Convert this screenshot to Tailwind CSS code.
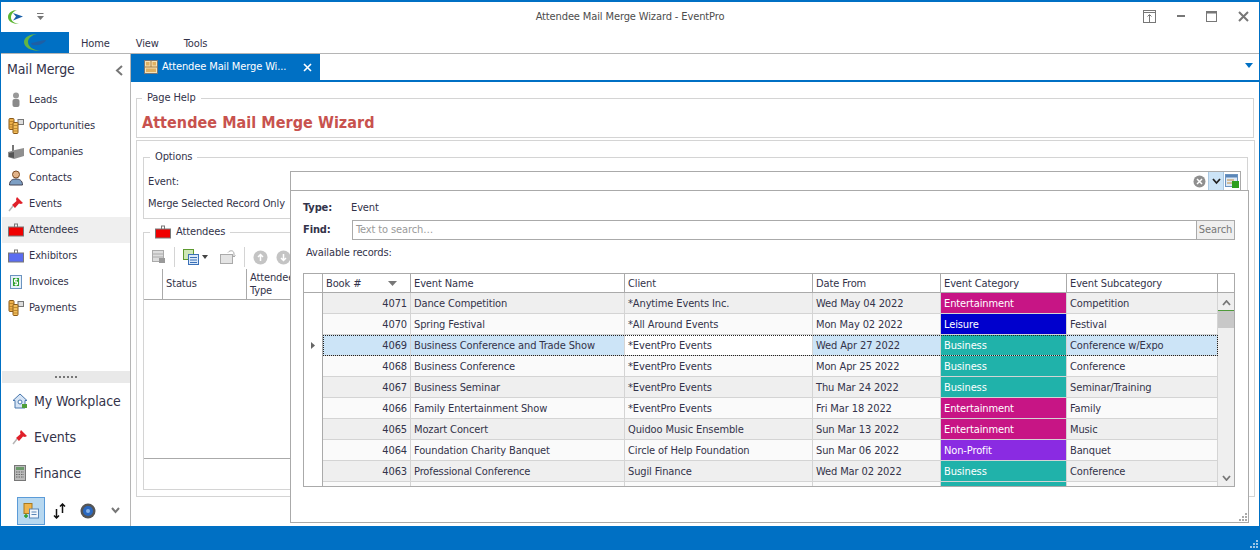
<!DOCTYPE html>
<html lang="en">
<head>
<meta charset="UTF-8">
<title>Attendee Mail Merge Wizard - EventPro</title>
<script src="https://cdn.jsdelivr.net/npm/@tailwindcss/browser@4"></script>
</head>
<body class="bg-white">
<div class="relative w-[1260px] h-[550px] overflow-hidden flex flex-col bg-white font-['DejaVu_Sans',sans-serif] [font-stretch:condensed] text-[11px] tracking-[-0.12px] text-[#33334a] border-t-2 border-x border-[#0070c4]">

  <!-- title bar -->
  <div class="relative h-[30px] shrink-0 flex items-center">
    <svg class="ml-[6px] mt-[-1px] shrink-0" width="18" height="16" viewBox="0 0 18 16"><path d="M10 1C5 1 1 4 1 8 1 12 5 15 12 15 7 14 4 12 4 8.500 4 5 6.500 2.500 10 1Z" fill="#5cb531"/><path d="M6 4L16 7.500 6 11.500 9 7.500Z" fill="#1a5fa8"/></svg>
    <svg class="ml-[11px] shrink-0" width="9" height="8" viewBox="0 0 9 8"><path d="M1 0.500H7.500" stroke="#777" stroke-width="1"/><path d="M1 3H8L4.500 7Z" fill="#777"/></svg>
    <div class="absolute left-0 right-0 top-[7px] text-center text-[#4d4d4d]">Attendee Mail Merge Wizard - EventPro</div>
    <div class="absolute right-[10px] top-[8px] flex gap-[20px] items-center">
      <svg width="13" height="13" viewBox="0 0 13 13" fill="none" stroke="#777"><rect x="0.500" y="0.500" width="12" height="12"/><path d="M0.500 2.500H12.500" /><path d="M6.500 12V5M4.500 6.500L6.500 4.500 8.500 6.500"/></svg>
      <svg width="10" height="13" viewBox="0 0 10 13"><rect x="1" y="5" width="8" height="2" fill="#777"/></svg>
      <svg width="11" height="11" viewBox="0 0 11 11" fill="none" stroke="#777"><rect x="0.500" y="0.500" width="10" height="10"/><rect x="0" y="0" width="11" height="2.500" fill="#777" stroke="none"/></svg>
      <svg class="ml-[1px]" width="11" height="11" viewBox="0 0 11 11" fill="none" stroke="#777" stroke-width="2"><path d="M1 1L10 10M10 1L1 10"/></svg>
    </div>
  </div>

  <!-- ribbon tabs -->
  <div class="h-[22px] shrink-0 flex items-center border-b border-[#b5b5b5]">
    <div class="w-[68px] h-full bg-[#0070c4] flex items-center justify-center">
      <svg width="24" height="20" viewBox="0 0 24 20"><path d="M14 1C7 1 1 4 1 9 1 14 7 18 18 18 9 17 5 13 5 9 5 5 9 2 14 1Z" fill="#62b544"/><path d="M8 10C12 10 18 7 23 7 21 11 15 13 9 12Z" fill="#1e5fa5"/></svg>
    </div>
    <span class="ml-[12px] mt-[4px]">Home</span>
    <span class="ml-[26px] mt-[4px]">View</span>
    <span class="ml-[25px] mt-[4px]">Tools</span>
  </div>

  <div class="flex flex-1 min-h-0">
    <!-- sidebar -->
    <div class="w-[130px] shrink-0 border-r border-[#b5b5b5] flex flex-col">
      <div class="h-[32px] mb-px shrink-0 flex items-center justify-between pl-[6px] pr-[7px]">
        <span class="text-[14px] -mt-[1px]">Mail Merge</span>
        <svg width="8" height="11" viewBox="0 0 8 11" fill="none" stroke="#777" stroke-width="2"><path d="M7 1L2 5.500 7 10"/></svg>
      </div>
      <div class="flex flex-col">
        <div class="h-[26px] flex items-center gap-[5px] pl-[7px]">
          <svg class="shrink-0" width="16" height="16" viewBox="0 0 16 16"><circle cx="8" cy="3.500" r="3" fill="#999"/><rect x="4.500" y="7" width="7" height="8" rx="2" fill="#8a8a8a"/></svg><span>Leads</span>
        </div>
        <div class="h-[26px] flex items-center gap-[5px] pl-[7px]">
          <svg class="shrink-0" width="16" height="16" viewBox="0 0 16 16"><rect x="10" y="1.500" width="5.500" height="5" fill="#ddd" stroke="#777"/><rect x="1" y="0.500" width="5" height="11" rx="1" fill="#eeb04a" stroke="#8a5a1a"/><rect x="5" y="4.500" width="5" height="11" rx="1" fill="#f4bf5c" stroke="#8a5a1a"/><path d="M1.500 3.500H5.500M1.500 6.500H5M1.500 9H5M5.500 7.500H9.500M5.500 10.500H9.500M5.500 13H9.500" stroke="#a8741e" stroke-width="0.700"/></svg><span>Opportunities</span>
        </div>
        <div class="h-[26px] flex items-center gap-[5px] pl-[7px]">
          <svg class="shrink-0" width="16" height="16" viewBox="0 0 16 16"><rect x="4" y="1" width="2" height="8" fill="#777"/><path d="M0 8L7 6 16 4V12L6 15 0 13Z" fill="#8f8f8f"/><path d="M1 9L6 8V14L1 13Z" fill="#555"/></svg><span>Companies</span>
        </div>
        <div class="h-[26px] flex items-center gap-[5px] pl-[7px]">
          <svg class="shrink-0" width="16" height="16" viewBox="0 0 16 16"><circle cx="8" cy="4.500" r="3.500" fill="#e2b48a" stroke="#7a4a22"/><path d="M1.500 15C1.500 10 5 9 8 9 11 9 14.500 10 14.500 15Z" fill="#7d9fc4" stroke="#445"/></svg><span>Contacts</span>
        </div>
        <div class="h-[26px] flex items-center gap-[5px] pl-[7px]">
          <svg class="shrink-0" width="16" height="16" viewBox="0 0 16 16"><path d="M9 1L15 7 13 8 11 7.500 7 12 4 9 8.500 5 8 3Z" fill="#e0202a"/><path d="M5 10L1 15" stroke="#b5b5b5" stroke-width="1.500"/></svg><span>Events</span>
        </div>
        <div class="h-[26px] flex items-center gap-[5px] pl-[7px] bg-[#efefef] ml-px">
          <svg class="-ml-px shrink-0" width="16" height="16" viewBox="0 0 16 16"><rect x="6.500" y="2" width="3" height="4" fill="none" stroke="#777"/><rect x="0.500" y="5" width="15" height="9" fill="#f00000" stroke="#777"/></svg><span>Attendees</span>
        </div>
        <div class="h-[26px] flex items-center gap-[5px] pl-[7px]">
          <svg class="shrink-0" width="16" height="16" viewBox="0 0 16 16"><rect x="6.500" y="2" width="3" height="4" fill="none" stroke="#777"/><rect x="0.500" y="5" width="15" height="9" fill="#5a6cf0" stroke="#777"/></svg><span>Exhibitors</span>
        </div>
        <div class="h-[26px] flex items-center gap-[5px] pl-[7px]">
          <svg class="shrink-0" width="16" height="16" viewBox="0 0 16 16"><rect x="2.500" y="1.500" width="11" height="13" fill="#e6f0fa" stroke="#6c94c0"/><rect x="5" y="4" width="6" height="8" fill="#2e9e2e"/><path d="M9.500 5.500H6.500V8H9.500V10.500H6.500M8 4V12" fill="none" stroke="#fff"/></svg><span>Invoices</span>
        </div>
        <div class="h-[26px] flex items-center gap-[5px] pl-[7px]">
          <svg class="shrink-0" width="16" height="16" viewBox="0 0 16 16"><rect x="10" y="1.500" width="5.500" height="5" fill="#ddd" stroke="#777"/><rect x="1" y="0.500" width="5" height="11" rx="1" fill="#eeb04a" stroke="#8a5a1a"/><rect x="5" y="4.500" width="5" height="11" rx="1" fill="#f4bf5c" stroke="#8a5a1a"/><path d="M1.500 3.500H5.500M1.500 6.500H5M1.500 9H5M5.500 7.500H9.500M5.500 10.500H9.500M5.500 13H9.500" stroke="#a8741e" stroke-width="0.700"/></svg><span>Payments</span>
        </div>
      </div>
      <div class="flex-1"></div>
      <div class="h-[12px] bg-[#e9e9e9] flex items-center justify-center gap-[2px] ml-px">
        <i class="w-[2px] h-[2px] bg-[#777]"></i><i class="w-[2px] h-[2px] bg-[#777]"></i><i class="w-[2px] h-[2px] bg-[#777]"></i><i class="w-[2px] h-[2px] bg-[#777]"></i><i class="w-[2px] h-[2px] bg-[#777]"></i><i class="w-[2px] h-[2px] bg-[#777]"></i>
      </div>
      <div class="h-[36px] flex items-center gap-[6px] pl-[11px] text-[14px]">
        <svg class="shrink-0" width="16" height="16" viewBox="0 0 16 16"><path d="M8 1L1 7.500H3V15H13V7.500H15Z" fill="#d6e4f5" stroke="#4a78ad"/><circle cx="8" cy="9" r="2" fill="#fff" stroke="#4a78ad"/><rect x="10" y="11" width="5" height="4" fill="#4f9e38"/></svg><span>My Workplace</span>
      </div>
      <div class="h-[36px] flex items-center gap-[6px] pl-[11px] text-[14px]">
        <svg class="shrink-0" width="16" height="16" viewBox="0 0 16 16"><path d="M9 1L15 7 13 8 11 7.500 7 12 4 9 8.500 5 8 3Z" fill="#e0202a"/><path d="M5 10L1 15" stroke="#b5b5b5" stroke-width="1.500"/></svg><span>Events</span>
      </div>
      <div class="h-[36px] mb-[5px] flex items-center gap-[6px] pl-[11px] text-[14px]">
        <svg class="shrink-0" width="16" height="16" viewBox="0 0 16 16"><rect x="2.500" y="0.500" width="11" height="15" fill="#bbb" stroke="#777"/><rect x="4" y="2" width="8" height="3" fill="#6a9a6a"/><path d="M4 7H12M4 9.500H12M4 12H12" stroke="#666" stroke-dasharray="1.500 1"/></svg><span>Finance</span>
      </div>
      <div class="h-[30px] shrink-0 flex items-center pl-[16px] pb-[1px]">
        <div class="w-[28px] h-[28px] bg-[#b7d8f0] border border-[#5b9bd8] flex items-center justify-center">
          <svg width="16" height="16" viewBox="0 0 16 16"><rect x="1" y="0.500" width="8" height="10" fill="#f0b44c" stroke="#a87a20"/><rect x="6.500" y="6" width="9" height="9" fill="#f2f6fb" stroke="#5a86b8"/><path d="M8.500 9H13.500M8.500 11.500H13.500" stroke="#5a86b8"/><path d="M3 11V15M1 13H5" stroke="#2e9e2e" stroke-width="1.500"/></svg>
        </div>
        <svg class="ml-[7px]" width="16" height="16" viewBox="0 0 16 16" fill="none" stroke="#111" stroke-width="1.500"><path d="M4.500 6V15M2 12.500L4.500 15 7 12.500"/><path d="M10.500 10V1M8 3.500L10.500 1 13 3.500"/></svg>
        <svg class="ml-[12px]" width="16" height="16" viewBox="0 0 16 16"><circle cx="8" cy="8" r="7.500" fill="#555"/><circle cx="8" cy="8" r="5" fill="#2a68c0"/><circle cx="8" cy="8" r="2" fill="#8ab4e8"/></svg>
        <svg class="ml-[15px]" width="9" height="7" viewBox="0 0 9 7" fill="none" stroke="#777" stroke-width="2"><path d="M1 1L4.500 5 8 1"/></svg>
      </div>
    </div>

    <!-- main -->
    <div class="flex-1 min-w-0 flex flex-col">
      <div class="h-[28px] shrink-0 flex border-b-2 border-[#0070c4]">
        <div class="w-[189px] bg-[#0070c4] text-white flex items-center pl-[13px] gap-[4px]">
          <svg class="shrink-0" width="14" height="14" viewBox="0 0 14 14"><rect x="0.500" y="0.500" width="13" height="13" fill="#f4e3b8" stroke="#777"/><path d="M7 1V7M1 7H13" stroke="#a77b3c"/><rect x="2" y="2" width="3.500" height="3.500" fill="#e0b060"/><rect x="8.500" y="2" width="3.500" height="3.500" fill="#e0b060"/><rect x="2" y="8.500" width="10" height="3.500" fill="#e0b060"/></svg>
          <span class="whitespace-nowrap">Attendee Mail Merge Wi...</span>
          <svg class="ml-[13px] shrink-0" width="9" height="9" viewBox="0 0 9 9" fill="none" stroke="#fff" stroke-width="1.600"><path d="M1 1L8 8M8 1L1 8"/></svg>
        </div>
        <div class="flex-1 flex justify-end pr-[6px] pt-[9px]">
          <svg width="8" height="5" viewBox="0 0 8 5"><path d="M0 0H8L4 5Z" fill="#0070c4"/></svg>
        </div>
      </div>

      <div class="flex-1 min-h-0 flex flex-col pl-[5px] pr-[5px] pt-[16px]">
        <!-- page help -->
        <div class="relative h-[40px] shrink-0 border border-[#d4d4d4]">
          <span class="absolute left-[5px] -top-[8px] bg-white px-[5px] leading-[14px]">Page Help</span>
          <div class="pl-[5px] pt-[13px] text-[16px] tracking-[0.05px] font-bold text-[#c8524e] leading-[22px] whitespace-nowrap">Attendee Mail Merge Wizard</div>
        </div>
        <!-- outer group -->
        <div class="relative mt-[2px] h-[357px] border border-[#d4d4d4] px-[6px] pt-[16px] mr-[-1px]">
          <div class="relative h-[62px] border border-[#d4d4d4]">
            <span class="absolute left-[6px] -top-[8px] bg-white px-[5px] leading-[14px]">Options</span>
            <div class="pl-[4px] pt-[17px] leading-[14px]">Event:</div>
            <div class="pl-[4px] pt-[8px] leading-[14px] whitespace-nowrap">Merge Selected Record Only</div>
          </div>
          <div class="relative mt-[13px] h-[258px] border border-[#d4d4d4] flex flex-col">
            <span class="absolute left-[6px] -top-[8px] bg-white px-[5px] leading-[14px] flex items-center gap-[5px]">
              <svg width="16" height="14" viewBox="0 0 16 14"><rect x="6.500" y="1" width="3" height="4" fill="none" stroke="#777"/><rect x="0.500" y="4" width="15" height="9" fill="#f00000" stroke="#777"/></svg>Attendees</span>
            <div class="h-[36px] shrink-0 pt-[12px] pl-[8px] flex items-center gap-[8px]">
              <svg width="14" height="14" viewBox="0 0 14 14"><rect x="0.500" y="0.500" width="11" height="11" fill="#ddd" stroke="#aaa"/><path d="M1 4H11M1 7H11" stroke="#aaa"/><rect x="7" y="8" width="6" height="5" fill="#999"/></svg>
              <i class="w-px h-[20px] bg-[#d4d4d4]"></i>
              <svg width="16" height="16" viewBox="0 0 16 16"><rect x="0.500" y="0.500" width="10" height="10" fill="#cfe8b8" stroke="#5d9a30"/><rect x="5.500" y="5.500" width="10" height="10" fill="#dbe9f8" stroke="#3a70b8"/><path d="M7 8.500H14M7 11H14M7 13.500H14" stroke="#3a70b8"/></svg>
              <svg class="-ml-[5px]" width="6" height="4" viewBox="0 0 6 4"><path d="M0 0H6L3 4Z" fill="#444"/></svg>
              <svg class="ml-[4px]" width="16" height="16" viewBox="0 0 16 16" fill="none" stroke="#aaa"><rect x="0.500" y="5.500" width="12" height="9" fill="#e4e4e4"/><path d="M8 3.500C10 1 14 1 14 5V8M12.500 6.500L14 8 15.500 6.500"/></svg>
              <i class="w-px h-[20px] bg-[#d4d4d4]"></i>
              <svg width="15" height="15" viewBox="0 0 15 15"><circle cx="7.500" cy="7.500" r="7" fill="#c4c4c4"/><path d="M7.500 11V4.500M5 7L7.500 4.500 10 7" stroke="#fff" fill="none" stroke-width="1.500"/></svg>
              <svg width="15" height="15" viewBox="0 0 15 15"><circle cx="7.500" cy="7.500" r="7" fill="#c4c4c4"/><path d="M7.500 4V10.500M5 8L7.500 10.500 10 8" stroke="#fff" fill="none" stroke-width="1.500"/></svg>
            </div>
            <div class="h-[31px] shrink-0 flex border-b border-[#aaaaaa]">
              <div class="w-[19px] border-r border-[#aaaaaa]"></div>
              <div class="w-[84px] border-r border-[#aaaaaa] pl-[3px] flex items-center">Status</div>
              <div class="pl-[3px] leading-[13px] flex items-center">Attendee<br>Type</div>
            </div>
            <div class="flex-1"></div>
            <div class="h-[31px] shrink-0 border-t border-[#aaaaaa]"></div>
          </div>
        </div>
      </div>
    </div>
  </div>

  <!-- status bar -->
  <div class="relative h-[24px] shrink-0 bg-[#0070c4] -mx-px">
    <svg class="absolute right-[2px] bottom-[2px]" width="8" height="8" viewBox="0 0 8 8" fill="#9cc6e6"><rect x="6" y="0" width="2" height="2"/><rect x="3" y="3" width="2" height="2"/><rect x="6" y="3" width="2" height="2"/><rect x="0" y="6" width="2" height="2"/><rect x="3" y="6" width="2" height="2"/><rect x="6" y="6" width="2" height="2"/></svg>
  </div>

  <!-- event lookup combo and its open dropdown -->
  <div class="absolute left-[289px] top-[169px] w-[951px] h-[20px] bg-white border border-[#aaaaaa] flex items-center justify-end">
    <svg class="mr-[2px]" width="13" height="13" viewBox="0 0 13 13"><circle cx="6.500" cy="6.500" r="6" fill="#8f8f8f"/><path d="M4 4L9 9M9 4L4 9" stroke="#fff" stroke-width="1.500"/></svg>
    <div class="w-[16px] h-[18px] bg-[#cce4f7] border-x border-[#a9c8e2] flex items-center justify-center">
      <svg width="9" height="7" viewBox="0 0 9 7" fill="none" stroke="#222" stroke-width="1.800"><path d="M1 1L4.500 5 8 1"/></svg>
    </div>
    <svg class="mx-px" width="14" height="14" viewBox="0 0 14 14"><rect x="0.500" y="0.500" width="12" height="12" fill="#dce9f7" stroke="#6c94c0"/><rect x="1" y="1" width="11" height="2.500" fill="#5a86b8"/><path d="M2 6H9M2 9H9" stroke="#c88f3c"/><rect x="7" y="7" width="7" height="7" fill="#2f9e1f"/></svg>
  </div>
  <div class="absolute left-[289px] top-[188px] w-[959px] h-[333px] bg-white border border-[#aaaaaa] flex flex-col">
    <div class="h-[28px] shrink-0 pl-[12px] pt-[10px] leading-[14px] flex">
      <span class="w-[48px] font-bold">Type:</span><span>Event</span>
    </div>
    <div class="h-[20px] mt-px shrink-0 flex items-center pl-[12px] pr-[13px]">
      <span class="w-[49px] font-bold">Find:</span>
      <div class="flex-1 h-[20px] border border-[#aaaaaa] pl-[3px] flex items-center text-[#9a9a9a]">Text to search…</div>
      <div class="w-[38px] h-[20px] bg-[#efefef] border border-l-0 border-[#aaaaaa] text-[#777] flex items-center justify-center">Search</div>
    </div>
    <div class="pl-[15px] pt-[6px] h-[33px] shrink-0 leading-[14px]">Available records:</div>

    <div class="relative ml-[12px] mr-[13px] h-[214px] border border-[#aaaaaa] overflow-hidden flex">
      <!-- indicator column -->
      <div class="w-[19px] shrink-0 border-r border-[#aaaaaa] flex flex-col">
        <div class="h-[19px] border-b border-[#aaaaaa] shrink-0"></div>
        <div class="h-[42px] shrink-0"></div>
        <div class="h-[21px] shrink-0 flex items-center justify-center">
          <svg width="4" height="7" viewBox="0 0 4 7"><path d="M0 0L4 3.500 0 7Z" fill="#666"/></svg>
        </div>
      </div>
      <div class="flex-1 min-w-0 flex flex-col">
        <div class="grid grid-cols-[88px_214px_188px_128px_126px_151px_1fr] h-[19px] shrink-0 border-b border-[#aaaaaa] pt-[2px] leading-[16px] [&>div]:-mt-[2px] [&>div]:pt-[2px]">
          <div class="relative pl-[3px] border-r border-[#aaaaaa]">Book #<svg class="absolute right-[13px] top-[7px]" width="9" height="5" viewBox="0 0 9 5"><path d="M0 0H9L4.500 5Z" fill="#777"/></svg></div>
          <div class="pl-[3px] border-r border-[#aaaaaa]">Event Name</div>
          <div class="pl-[3px] border-r border-[#aaaaaa]">Client</div>
          <div class="pl-[3px] border-r border-[#aaaaaa]">Date From</div>
          <div class="pl-[3px] border-r border-[#aaaaaa]">Event Category</div>
          <div class="pl-[3px] border-r border-[#aaaaaa]">Event Subcategory</div>
          <div></div>
        </div>
        <div class="flex flex-1 min-h-0">
          <div class="w-[895px] shrink-0 flex flex-col overflow-hidden [&>div]:grid [&>div]:grid-cols-[88px_214px_188px_128px_126px_151px] [&>div]:h-[21px] [&>div]:shrink-0 [&>div]:border-b [&>div]:border-[#d4d4d4] [&>div]:leading-[18px] [&>div>span]:px-[3px] [&>div>span]:pt-[2px] [&>div>span]:border-r [&>div>span]:border-[#d4d4d4] [&>div>span]:whitespace-nowrap">
            <div class="bg-[#efefef]"><span class="text-right">4071</span><span>Dance Competition</span><span>*Anytime Events Inc.</span><span>Wed May 04 2022</span><span class="bg-[#c71585] text-white">Entertainment</span><span>Competition</span></div>
            <div class="bg-[#fafafa]"><span class="text-right">4070</span><span>Spring Festival</span><span>*All Around Events</span><span>Mon May 02 2022</span><span class="bg-[#0000cd] text-white">Leisure</span><span>Festival</span></div>
            <div class="bg-[#cce4f7] outline-1 outline-dotted -outline-offset-1 outline-[#222]"><span class="text-right">4069</span><span>Business Conference and Trade Show</span><span class="bg-white">*EventPro Events</span><span>Wed Apr 27 2022</span><span class="bg-[#20b2aa] text-white">Business</span><span>Conference w/Expo</span></div>
            <div class="bg-[#fafafa]"><span class="text-right">4068</span><span>Business Conference</span><span>*EventPro Events</span><span>Mon Apr 25 2022</span><span class="bg-[#20b2aa] text-white">Business</span><span>Conference</span></div>
            <div class="bg-[#efefef]"><span class="text-right">4067</span><span>Business Seminar</span><span>*EventPro Events</span><span>Thu Mar 24 2022</span><span class="bg-[#20b2aa] text-white">Business</span><span>Seminar/Training</span></div>
            <div class="bg-[#fafafa]"><span class="text-right">4066</span><span>Family Entertainment Show</span><span>*EventPro Events</span><span>Fri Mar 18 2022</span><span class="bg-[#c71585] text-white">Entertainment</span><span>Family</span></div>
            <div class="bg-[#efefef]"><span class="text-right">4065</span><span>Mozart Concert</span><span>Quidoo Music Ensemble</span><span>Sun Mar 13 2022</span><span class="bg-[#c71585] text-white">Entertainment</span><span>Music</span></div>
            <div class="bg-[#fafafa]"><span class="text-right">4064</span><span>Foundation Charity Banquet</span><span>Circle of Help Foundation</span><span>Sun Mar 06 2022</span><span class="bg-[#8a2be2] text-white">Non-Profit</span><span>Banquet</span></div>
            <div class="bg-[#efefef]"><span class="text-right">4063</span><span>Professional Conference</span><span>Sugil Finance</span><span>Wed Mar 02 2022</span><span class="bg-[#20b2aa] text-white">Business</span><span>Conference</span></div>
            <div class="bg-[#fafafa]"><span></span><span></span><span></span><span></span><span class="bg-[#20b2aa]"></span><span></span></div>
          </div>
          <!-- scrollbar -->
          <div class="flex-1 bg-[#efefef] flex flex-col items-center">
            <svg class="mt-[7px]" width="9" height="6" viewBox="0 0 9 6" fill="none" stroke="#777" stroke-width="1.800"><path d="M1 5L4.500 1 8 5"/></svg>
            <div class="w-full h-[18px] mt-[4px] bg-[#c8c8c8] border-t border-[#4f9a3a]"></div>
            <div class="flex-1"></div>
            <svg class="mb-[5px]" width="9" height="6" viewBox="0 0 9 6" fill="none" stroke="#777" stroke-width="1.800"><path d="M1 1L4.500 5 8 1"/></svg>
          </div>
        </div>
      </div>
    </div>
    <svg class="absolute right-[1px] bottom-[1px]" width="8" height="8" viewBox="0 0 8 8" fill="#aaa"><rect x="6" y="0" width="2" height="2"/><rect x="3" y="3" width="2" height="2"/><rect x="6" y="3" width="2" height="2"/><rect x="0" y="6" width="2" height="2"/><rect x="3" y="6" width="2" height="2"/><rect x="6" y="6" width="2" height="2"/></svg>
  </div>
</div>
</body>
</html>
